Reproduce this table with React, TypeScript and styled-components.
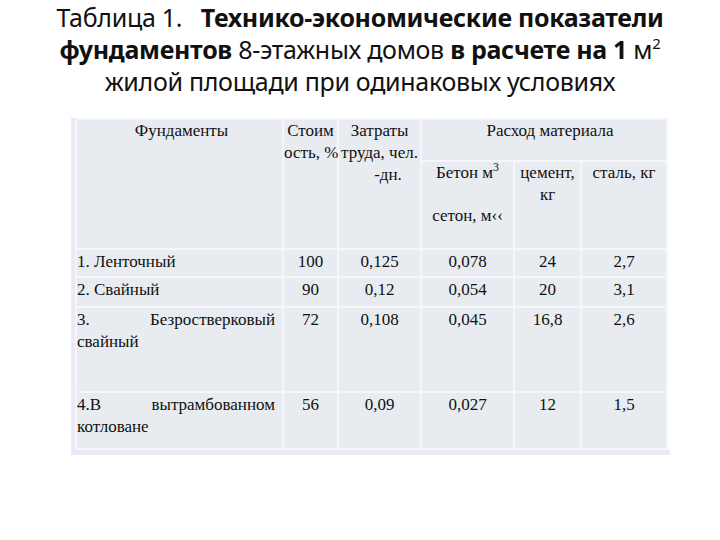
import React, { ReactElement } from 'react';
import styled, { createGlobalStyle } from 'styled-components';

const GlobalStyle = createGlobalStyle`
  html, body {
    margin: 0;
    padding: 0;
    background: #ffffff;
  }
`;

const Page = styled.div`
  width: 720px;
  height: 540px;
  overflow: hidden;
  background: #ffffff;
`;

const Title = styled.h1`
  margin: 0;
  padding-top: 1px;
  font-family: 'Noto Sans', 'Open Sans', sans-serif;
  font-weight: 400;
  font-size: 25px;
  line-height: 32px;
  letter-spacing: -0.3px;
  text-align: center;
  color: #111111;

  b { font-weight: 700; }
  sup { font-size: 0.6em; line-height: 0; vertical-align: 0.7em; }
`;

const TableWrap = styled.div`
  margin: 21px 0 0 71px;
  width: 595px;
  border-left: 4px solid #ece8f6;
  border-bottom: 5px solid #ece8f6;
`;

const Table = styled.table`
  width: 591px;
  border-collapse: collapse;
  table-layout: fixed;
  background: #e8ecf0;
  font-family: 'Liberation Serif', 'Times New Roman', serif;
  font-size: 17px;
  line-height: 22px;
  color: #111111;
`;

const Row = styled.tr<{ $h: number }>`
  height: ${({ $h }) => $h}px;
`;

const Cell = styled.td<{ $align?: 'left' | 'center'; $pad?: string }>`
  vertical-align: top;
  padding: ${({ $pad }) => $pad ?? '1px 4px 0'};
  text-align: ${({ $align }) => $align ?? 'center'};
  border: 2px solid #f4f6fa;
  white-space: nowrap;
  overflow: visible;
`;

const HeadCell = styled(Cell).attrs({ as: 'th' })`
  font-weight: 400;
`;

const SplitLine = styled.div`
  display: flex;
  justify-content: space-between;
`;

const Sup = styled.sup`
  font-size: 0.7em;
  line-height: 0;
  vertical-align: 0.55em;
`;

const Gap = styled.div`
  height: 21px;
`;

type DataRow = {
  name: React.ReactNode;
  height: number;
  values: string[];
};

const rows: DataRow[] = [
  { name: '1. Ленточный', height: 28, values: ['100', '0,125', '0,078', '24', '2,7'] },
  { name: '2. Свайный', height: 30, values: ['90', '0,12', '0,054', '20', '3,1'] },
  {
    name: (
      <>
        <SplitLine><span>3.</span><span>Безростверковый</span></SplitLine>
        свайный
      </>
    ),
    height: 85,
    values: ['72', '0,108', '0,045', '16,8', '2,6'],
  },
  {
    name: (
      <>
        <SplitLine><span>4.В</span><span>вытрамбованном</span></SplitLine>
        котловане
      </>
    ),
    height: 57,
    values: ['56', '0,09', '0,027', '12', '1,5'],
  },
];

const App = (): ReactElement => (
  <Page>
    <GlobalStyle />
    <Title>
      Таблица 1.&nbsp;&nbsp; <b>Технико-экономические показатели</b>
      <br />
      <b>фундаментов</b> 8-этажных домов <b>в расчете на 1</b> м<sup>2</sup>
      <br />
      жилой площади при одинаковых условиях
    </Title>
    <TableWrap>
      <Table>
        <colgroup>
          <col style={{ width: 207 }} />
          <col style={{ width: 55 }} />
          <col style={{ width: 83 }} />
          <col style={{ width: 93 }} />
          <col style={{ width: 67 }} />
          <col style={{ width: 86 }} />
        </colgroup>
        <thead>
          <Row $h={42}>
            <HeadCell rowSpan={2} $pad="0 0 0 4px">Фундаменты</HeadCell>
            <HeadCell rowSpan={2} $pad="0">Стоим<br />ость, %</HeadCell>
            <HeadCell rowSpan={2} $pad="0">Затраты<br />труда, чел.<br />&nbsp;&nbsp;&nbsp;&nbsp;-дн.</HeadCell>
            <HeadCell colSpan={3} $pad="0 0 0 12px">Расход материала</HeadCell>
          </Row>
          <Row $h={88}>
            <HeadCell $pad="0">Бетон м<Sup>3</Sup><Gap />сетон, м‹‹</HeadCell>
            <HeadCell $pad="0">цемент,<br />кг</HeadCell>
            <HeadCell $pad="0">сталь, кг</HeadCell>
          </Row>
        </thead>
        <tbody>
          {rows.map((row) => (
            <Row $h={row.height} key={row.values.join('-')}>
              <Cell $align="left" $pad="1px 7px 0 0" style={{ whiteSpace: 'normal' }}>{row.name}</Cell>
              {row.values.map((value, index) => (
                // eslint-disable-next-line react/no-array-index-key
                <Cell key={index}>{value}</Cell>
              ))}
            </Row>
          ))}
        </tbody>
      </Table>
    </TableWrap>
  </Page>
);

export default App;
